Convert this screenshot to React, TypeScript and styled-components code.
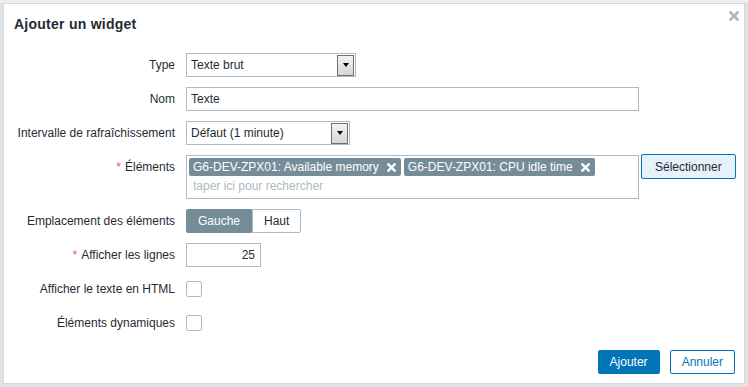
import React from "react";
import styled, { createGlobalStyle } from "styled-components";

const Global = createGlobalStyle`
  html, body, #root { height: 100%; }
  body {
    margin: 0;
    background: #dfe3e6;
    font-family: "Liberation Sans", Arial, sans-serif;
    font-size: 12px;
    color: #1f2c33;
  }
  * { box-sizing: border-box; }
`;

const Backdrop = styled.div`
  height: 100%;
  padding: 3px;
  background: linear-gradient(#eceef0 0, #eceef0 3px, #dfe3e6 3px);
`;

const Dialog = styled.div`
  height: 100%;
  background: #ffffff;
  border: 1px solid #d3d9dd;
  display: flex;
  flex-direction: column;
`;

const Header = styled.div`
  position: relative;
  padding: 12px 10px 0 10px;
`;

const Title = styled.h4`
  margin: 0;
  font-size: 14px;
  line-height: 17px;
  font-weight: bold;
  letter-spacing: 0.25px;
  color: #1f2c33;
`;

const CloseBtn = styled.button`
  position: absolute;
  top: 4px;
  right: 2px;
  width: 16px;
  height: 16px;
  padding: 0;
  border: 0;
  background: none;
  display: flex;
  align-items: center;
  justify-content: center;
`;

const Form = styled.div`
  display: grid;
  grid-template-columns: 161px 1fr;
  column-gap: 11px;
  row-gap: 10px;
  padding: 20px 10px 0 10px;
`;

const Label = styled.div`
  text-align: right;
  white-space: nowrap;
  line-height: 24px;
  color: #1f2c33;
`;

const Asterisk = styled.span`
  color: #e45959;
  margin-right: 4px;
`;

const Field = styled.div`
  display: flex;
  align-items: flex-start;
  min-height: 24px;
`;

const CheckField = styled(Field)`
  align-items: center;
`;

const SelectBox = styled.div<{ $w: number }>`
  width: ${(p) => p.$w}px;
  height: 24px;
  border: 1px solid #acbbc2;
  background: #fff;
  display: flex;
  align-items: center;
  justify-content: space-between;
  padding: 0 1px 0 4px;
  color: #1f2c33;
`;

const DropButton = styled.span`
  width: 17px;
  height: 21px;
  border: 1px solid #707070;
  background: linear-gradient(#f2f2f2, #d6d6d6);
  display: flex;
  align-items: center;
  justify-content: center;
`;

const Triangle = styled.span`
  width: 0;
  height: 0;
  border-left: 3.5px solid transparent;
  border-right: 3.5px solid transparent;
  border-top: 4px solid #000;
`;

const TextInput = styled.div<{ $w: number; $right?: boolean }>`
  width: ${(p) => p.$w}px;
  height: 24px;
  border: 1px solid #acbbc2;
  background: #fff;
  line-height: 22px;
  padding: 0 5px 0 4px;
  text-align: ${(p) => (p.$right ? "right" : "left")};
  color: #1f2c33;
`;

const MultiSelect = styled.div`
  width: 453px;
  height: 44px;
  border: 1px solid #acbbc2;
  background: #fff;
  padding: 2px 0 0 2px;
  display: flex;
  flex-direction: column;
`;

const Chips = styled.div`
  display: flex;
  gap: 3px;
`;

const Chip = styled.span`
  height: 18px;
  background: #768d99;
  color: #fff;
  border-radius: 2px;
  display: inline-flex;
  align-items: center;
  gap: 8px;
  padding: 0 5px 0 4px;
  white-space: nowrap;
`;

const Placeholder = styled.div`
  color: #acbbc2;
  line-height: 20px;
  padding-left: 4px;
`;

const SelectButton = styled.button`
  margin-left: 2px;
  margin-top: -1px;
  height: 25px;
  padding: 0 13px;
  border: 1px solid #0275b8;
  border-radius: 2px;
  background: #e6f1fa;
  color: #1f2c33;
  font-family: inherit;
  font-size: 12px;
`;

const Segmented = styled.div`
  display: flex;
  height: 24px;
`;

const Segment = styled.span<{ $on?: boolean }>`
  display: flex;
  align-items: center;
  padding: 0 11px;
  border: 1px solid ${(p) => (p.$on ? "#768d99" : "#acbbc2")};
  background: ${(p) => (p.$on ? "#768d99" : "#fff")};
  color: ${(p) => (p.$on ? "#fff" : "#1f2c33")};
  border-radius: ${(p) => (p.$on ? "2px 0 0 2px" : "0 2px 2px 0")};
`;

const Checkbox = styled.span`
  width: 16px;
  height: 16px;
  border: 1px solid #acbbc2;
  border-radius: 2px;
  background: #fff;
`;

const Footer = styled.div`
  margin-top: auto;
  display: flex;
  justify-content: flex-end;
  gap: 10px;
  padding: 0 9px 9px 10px;
`;

const Button = styled.button<{ $primary?: boolean }>`
  height: 24px;
  padding: 0 11px;
  border-radius: 2px;
  border: 1px solid #0275b8;
  background: ${(p) => (p.$primary ? "#0275b8" : "#fff")};
  color: ${(p) => (p.$primary ? "#fff" : "#0275b8")};
  font-family: inherit;
  font-size: 12px;
`;

const XIcon = ({ size, color, w }: { size: number; color: string; w: number }) => (
  <svg width={size} height={size} viewBox="0 0 10 10">
    <path d="M1.5 1.5 L8.5 8.5 M8.5 1.5 L1.5 8.5" stroke={color} strokeWidth={w} strokeLinecap="square" />
  </svg>
);

export default function App() {
  return (
    <>
      <Global />
      <Backdrop>
        <Dialog>
          <Header>
            <Title>Ajouter un widget</Title>
            <CloseBtn aria-label="Fermer">
              <XIcon size={10} color="#a9b7be" w={2.6} />
            </CloseBtn>
          </Header>
          <Form>
            <Label>Type</Label>
            <Field>
              <SelectBox $w={170}>
                Texte brut
                <DropButton>
                  <Triangle />
                </DropButton>
              </SelectBox>
            </Field>

            <Label>Nom</Label>
            <Field>
              <TextInput $w={453}>Texte</TextInput>
            </Field>

            <Label>Intervalle de rafraîchissement</Label>
            <Field>
              <SelectBox $w={164}>
                Défaut (1 minute)
                <DropButton>
                  <Triangle />
                </DropButton>
              </SelectBox>
            </Field>

            <Label>
              <Asterisk>*</Asterisk>Éléments
            </Label>
            <Field>
              <MultiSelect>
                <Chips>
                  <Chip>
                    G6-DEV-ZPX01: Available memory
                    <XIcon size={9} color="#ffffff" w={2.6} />
                  </Chip>
                  <Chip>
                    G6-DEV-ZPX01: CPU idle time
                    <XIcon size={9} color="#ffffff" w={2.6} />
                  </Chip>
                </Chips>
                <Placeholder>taper ici pour rechercher</Placeholder>
              </MultiSelect>
              <SelectButton>Sélectionner</SelectButton>
            </Field>

            <Label>Emplacement des éléments</Label>
            <Field>
              <Segmented>
                <Segment $on>Gauche</Segment>
                <Segment>Haut</Segment>
              </Segmented>
            </Field>

            <Label>
              <Asterisk>*</Asterisk>Afficher les lignes
            </Label>
            <Field>
              <TextInput $w={75} $right>
                25
              </TextInput>
            </Field>

            <Label>Afficher le texte en HTML</Label>
            <CheckField>
              <Checkbox />
            </CheckField>

            <Label>Éléments dynamiques</Label>
            <CheckField>
              <Checkbox />
            </CheckField>
          </Form>
          <Footer>
            <Button $primary>Ajouter</Button>
            <Button>Annuler</Button>
          </Footer>
        </Dialog>
      </Backdrop>
    </>
  );
}
